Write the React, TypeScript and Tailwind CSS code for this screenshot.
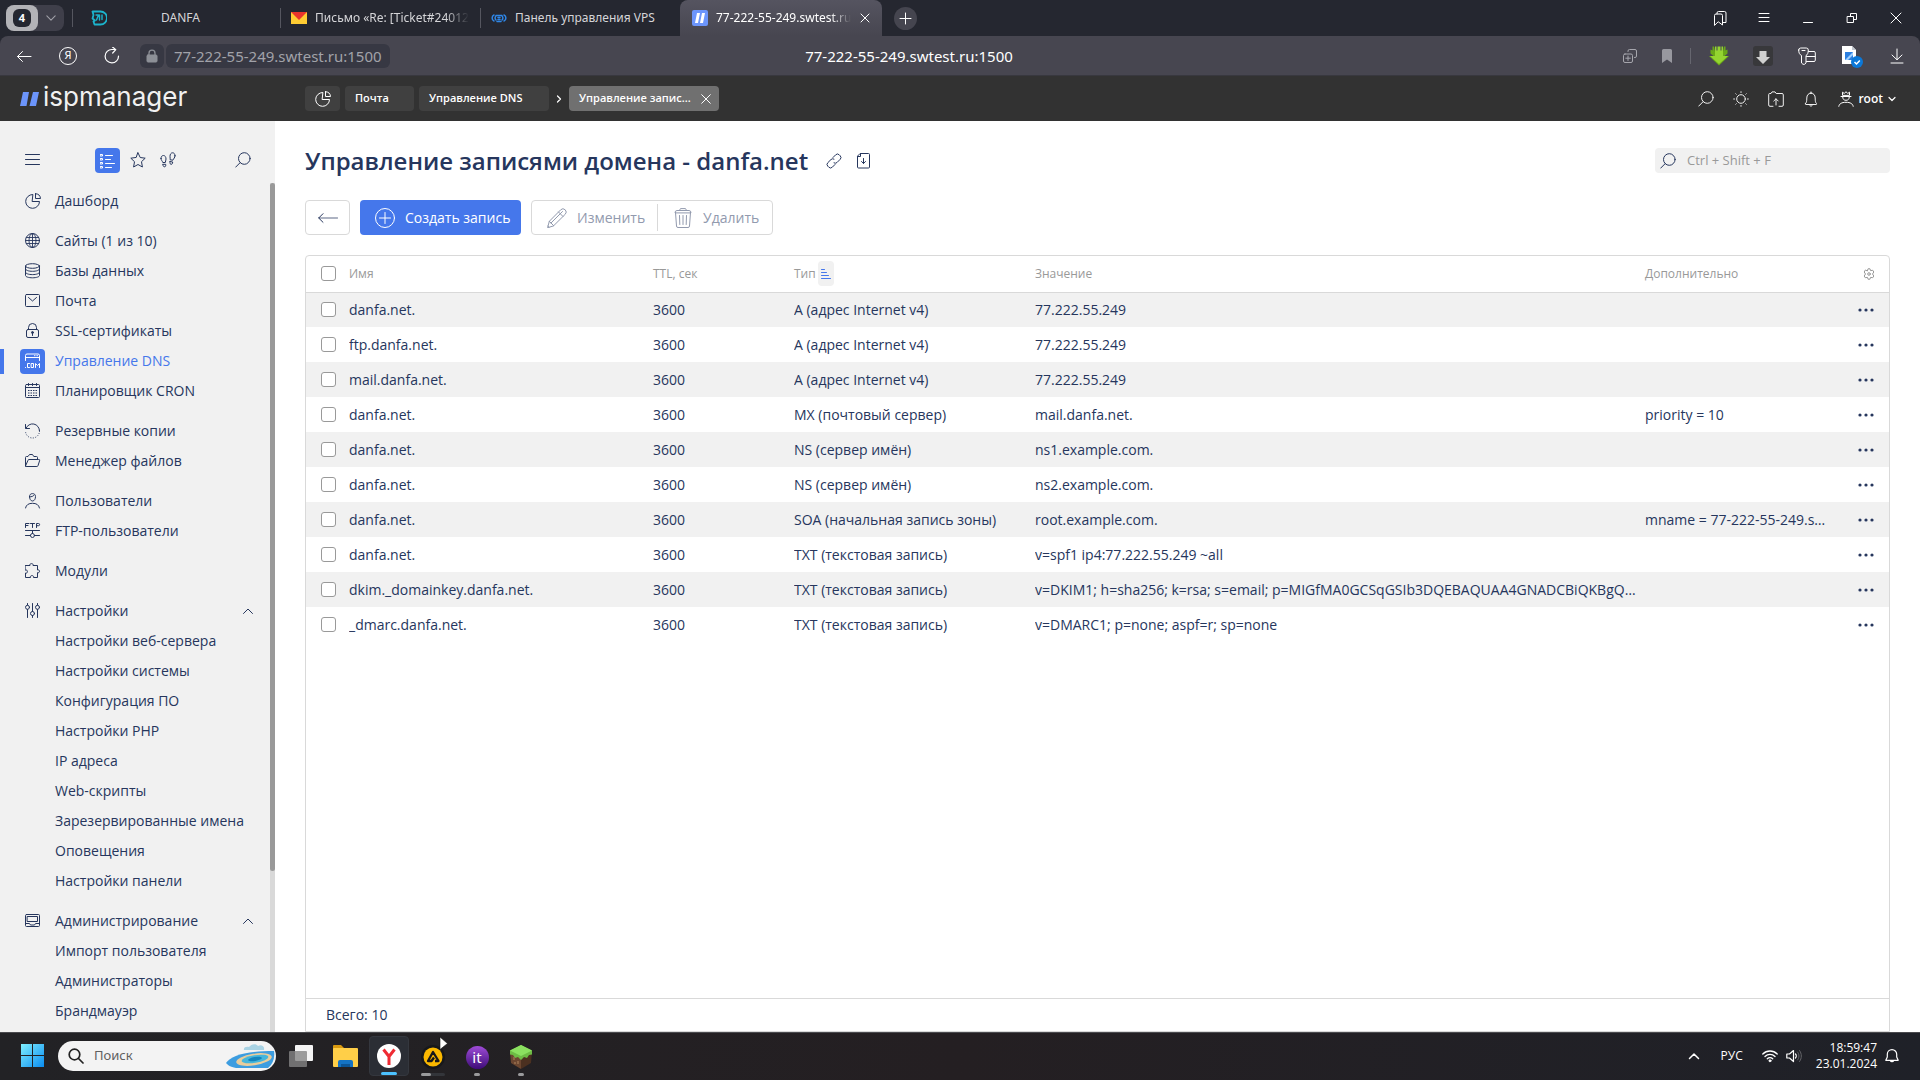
import type { ReactNode } from "react";

type IconProps = { children: ReactNode; className?: string; box?: number };

function Icon({ children, className = "size-4", box = 16 }: IconProps) {
  return (
    <svg
      viewBox={`0 0 ${box} ${box}`}
      className={`shrink-0 ${className}`}
      fill="none"
      stroke="currentColor"
      strokeLinecap="round"
      strokeLinejoin="round"
      aria-hidden="true"
    >
      {children}
    </svg>
  );
}

const PieIcon = () => (
  <Icon>
    <path d="M7.5 1.500A6.900 6.900 0 1 0 14.500 8.500h-7z" />
    <path d="M10.5.7v4.800h5A5.200 5.200 0 0 0 10.5.7z" />
  </Icon>
);
const GlobeIcon = () => (
  <Icon>
    <circle cx="7.5" cy="7.5" r="7" />
    <ellipse cx="7.5" cy="7.5" rx="3.500" ry="7" strokeWidth=".9" />
    <path d="M7.500.5v14M.5 7.500h14M1.500 4.500h12M1.500 10.500h12" strokeWidth=".9" />
  </Icon>
);
const DatabaseIcon = () => (
  <Icon>
    <ellipse cx="7.5" cy="3" rx="7" ry="2.300" />
    <path d="M.5 3v9.500c0 1.300 3.100 2.300 7 2.300s7-1 7-2.300V3M.5 6c0 1.300 3.100 2.300 7 2.300s7-1 7-2.300M.5 9.300c0 1.300 3.100 2.300 7 2.300s7-1 7-2.300" />
  </Icon>
);
const MailIcon = () => (
  <Icon>
    <rect x=".5" y="1.500" width="14" height="12" rx="1" />
    <path d="M3.500 4.500 7.500 8l4-3.500" />
  </Icon>
);
const LockIcon = () => (
  <Icon>
    <rect x="1.500" y="6.500" width="12" height="8" rx="1.500" />
    <path d="M3.500 6.500V4.500a4 4 0 0 1 8 0v2M7.500 10v2.500" />
    <circle cx="7.5" cy="9.500" r="1" fill="currentColor" />
  </Icon>
);
const CalendarIcon = () => (
  <Icon>
    <rect x=".5" y="1.500" width="14" height="13" rx="1" />
    <path d="M.5 4.500h14M3.500.5v2M7.500.5v2M11.500.5v2" />
    <path d="M3 7.500h9M3 10h9M3 12.500h9" strokeDasharray="1.500 1" strokeLinecap="butt" />
  </Icon>
);
const BackupIcon = () => (
  <Icon>
    <path d="M.5 1.500v4h4M1 5.300A7 7 0 0 1 14.500 8" />
    <path d="M14.500 8a7 7 0 0 1-14 0" strokeDasharray=".2 2.300" />
  </Icon>
);
const FolderIcon = () => (
  <Icon>
    <path d="M.5 13V4.500a1 1 0 0 1 1-1H3L4.500 1.500h3l1.300 2h2.700a1 1 0 0 1 1 1v2M.5 13 3 7.300a1 1 0 0 1 1-.8h9.700a.9.900 0 0 1 .9 1.200L13 12.700a1.200 1.200 0 0 1-1.100.8H1.100a.6.600 0 0 1-.6-.5z" />
  </Icon>
);
const UserIcon = () => (
  <Icon>
    <path d="M4.500 3.500C4.500 1.600 5.700.6 7.500.6s3 1 3 2.900c0 2.500-1.200 4.500-3 4.500s-3-2-3-4.500zM4.500 3.800c2 .2 4-.6 4.500-1.500M.5 15c.7-3.300 3.200-4.700 7-4.700s6.300 1.400 7 4.700" />
  </Icon>
);
const FtpIcon = () => (
  <Icon>
    <path d="M.5 4.500v-4h3.500M.5 2.500H3M5.500.5h4M7.500.5v4M11.500 4.500v-4h2a1 1 0 0 1 0 2.200h-2M.5 7.500h14M.5 12.500h5M9.500 12.500h5M7.500 7.500v3" />
    <circle cx="7.5" cy="12.500" r="2" />
  </Icon>
);
const PuzzleIcon = () => (
  <Icon>
    <path d="M.5 2.500H5C4.500 1.200 5.500.6 6.500.6s2 .6 1.500 1.900H12.500V7c1.200-.5 2 .3 2 1.300s-.8 1.800-2 1.300v4.900H8.500c.5-1.300-.5-1.900-1.500-1.900s-2 .6-1.500 1.900H.5v-4.500c1.300.5 1.900-.4 1.900-1.400S1.800 6.500.5 7z" />
  </Icon>
);
const SlidersIcon = () => (
  <Icon>
    <path d="M2.500.5V2M2.500 6.500v8M7.500.5v8M7.500 12.500v2M12.500.5V2M12.500 6.500v8" />
    <circle cx="2.500" cy="4.300" r="2" />
    <circle cx="7.500" cy="10.500" r="2" />
    <circle cx="12.500" cy="4.300" r="2" />
  </Icon>
);
const MonitorIcon = () => (
  <Icon>
    <rect x=".5" y="1.500" width="14" height="12" rx="1" />
    <path d="M2.500 3.500h10v5h-10zM.5 10.500h4l1 1.500h4l1-1.500h4" />
  </Icon>
);
const DnsIcon = () => (
  <Icon>
    <path d="M.5 7.500v-5A1.500 1.500 0 0 1 2 1h11a1.500 1.500 0 0 1 1.500 1.500v5M.5 4.500h14M9.500 2.700h.1M11 2.700h.1M12.500 2.700h.1" />
    <path d="M.5 14.500h.1M4.500 10.500h-2v4h2M6.500 10.500h2v4h-2zM10.500 14.500v-4l2 2 2-2v4" />
  </Icon>
);
const SearchIcon = ({ className }: { className?: string }) => (
  <Icon className={className}>
    <circle cx="9.300" cy="6.500" r="5.800" />
    <path d="M5.200 10.600.7 15.100" />
  </Icon>
);
const ChevronUp = () => (
  <Icon className="size-3" box={12}>
    <path d="M1.500 8.500 6 4l4.500 4.500" />
  </Icon>
);
const BellIcon = () => (
  <Icon>
    <path d="M2.500 12.500c1-1 1.300-2 1.300-5.500C3.800 4 5.500 2.300 8 2.300S12.200 4 12.200 7c0 3.500.3 4.500 1.300 5.500.4.500.2 1-.4 1H2.900c-.6 0-.8-.5-.4-1zM6.500 13.700c.3 2 2.700 2 3 0M7.300 2.200c-.3-2 1.700-2 1.400 0" />
  </Icon>
);

type Item = { label: string; icon?: ReactNode; active?: boolean; open?: boolean };

const menu: Item[][] = [
  [{ label: "Дашборд", icon: <PieIcon /> }],
  [
    { label: "Сайты (1 из 10)", icon: <GlobeIcon /> },
    { label: "Базы данных", icon: <DatabaseIcon /> },
    { label: "Почта", icon: <MailIcon /> },
    { label: "SSL-сертификаты", icon: <LockIcon /> },
    { label: "Управление DNS", icon: <DnsIcon />, active: true },
    { label: "Планировщик CRON", icon: <CalendarIcon /> },
  ],
  [
    { label: "Резервные копии", icon: <BackupIcon /> },
    { label: "Менеджер файлов", icon: <FolderIcon /> },
  ],
  [
    { label: "Пользователи", icon: <UserIcon /> },
    { label: "FTP-пользователи", icon: <FtpIcon /> },
  ],
  [{ label: "Модули", icon: <PuzzleIcon /> }],
  [
    { label: "Настройки", icon: <SlidersIcon />, open: true },
    { label: "Настройки веб-сервера" },
    { label: "Настройки системы" },
    { label: "Конфигурация ПО" },
    { label: "Настройки PHP" },
    { label: "IP адреса" },
    { label: "Web-скрипты" },
    { label: "Зарезервированные имена" },
    { label: "Оповещения" },
    { label: "Настройки панели" },
  ],
  [
    { label: "Администрирование", icon: <MonitorIcon />, open: true },
    { label: "Импорт пользователя" },
    { label: "Администраторы" },
    { label: "Брандмауэр" },
  ],
];

const records = [
  ["danfa.net.", "A (адрес Internet v4)", "77.222.55.249", ""],
  ["ftp.danfa.net.", "A (адрес Internet v4)", "77.222.55.249", ""],
  ["mail.danfa.net.", "A (адрес Internet v4)", "77.222.55.249", ""],
  ["danfa.net.", "MX (почтовый сервер)", "mail.danfa.net.", "priority = 10"],
  ["danfa.net.", "NS (сервер имён)", "ns1.example.com.", ""],
  ["danfa.net.", "NS (сервер имён)", "ns2.example.com.", ""],
  ["danfa.net.", "SOA (начальная запись зоны)", "root.example.com.", "mname = 77-222-55-249.s…"],
  ["danfa.net.", "TXT (текстовая запись)", "v=spf1 ip4:77.222.55.249 ~all", ""],
  [
    "dkim._domainkey.danfa.net.",
    "TXT (текстовая запись)",
    "v=DKIM1; h=sha256; k=rsa; s=email; p=MIGfMA0GCSqGSIb3DQEBAQUAA4GNADCBiQKBgQ…",
    "",
  ],
  ["_dmarc.danfa.net.", "TXT (текстовая запись)", "v=DMARC1; p=none; aspf=r; sp=none", ""],
];

function TabBar() {
  return (
    <div className="flex h-9 shrink-0 items-center bg-[#252730] text-[12px] text-[#d5d5d8]">
      <div className="ml-1.5 flex h-[26px] w-[58px] items-center rounded-lg bg-[#3f3f4a]">
        <button className="flex h-[26px] w-8 items-center justify-center rounded-lg bg-[#b3b3b7]" aria-label="Группа вкладок">
          <span className="flex h-[18px] w-[18px] items-center justify-center rounded-[6px] bg-[#252730] text-[11px] font-bold text-white">
            4
          </span>
        </button>
        <button className="flex flex-1 justify-center text-[#a0a0a8]" aria-label="Список вкладок">
          <Icon className="size-2.5" box={12}>
            <path d="m1 3.500 5 5 5-5" strokeWidth="1.300" />
          </Icon>
        </button>
      </div>
      <div className="ml-2 h-[18px] w-px bg-[#55565f]" />
      <button className="flex h-full w-[207px] items-center pl-[18px]">
        <Icon className="size-4 text-[#1cb4cc]">
          <path d="M1.500 1.500h8a6.500 6.500 0 0 1 0 13H3.500l-1-3 1.500-1-2.500-2 1-3.500z" strokeWidth="1.800" />
          <path d="M5 5h2.500L5.500 10M8.500 5v5M11 5v4.500" strokeWidth="1.400" />
        </Icon>
        <span className="flex-1 pr-7 pl-0.5 text-center">DANFA</span>
      </button>
      <div className="h-5 w-px bg-[#55565f]" />
      <button className="flex h-full w-[199px] items-center gap-2 pr-2 pl-2.5">
        <svg viewBox="0 0 16 12" className="h-3 w-4 shrink-0" aria-hidden="true">
          <path fill="#ffcc33" d="M0 0h16v12H0z" />
          <path fill="#e8352c" d="M0 0h16L8 8z" />
        </svg>
        <span className="whitespace-nowrap [mask-image:linear-gradient(to_right,black_85%,transparent)]">
          Письмо «Re: [Ticket#24012
        </span>
      </button>
      <div className="h-5 w-px bg-[#55565f]" />
      <button className="flex h-full w-[199px] items-center gap-2 pl-2.5 whitespace-nowrap">
        <Icon className="size-4 text-[#2f87e8]">
          <path d="M3 5C.5 6 .5 10 3 11M5 6c-1.200 1-1.200 3 0 4M13 5c2.500 1 2.500 5 0 6M11 6c1.200 1 1.200 3 0 4M7 7.500h2M7 9.500h2M5 5.500h6M6 11.500h4" strokeWidth="1.500" />
        </Icon>
        Панель управления VPS
      </button>
      <button className="flex h-full w-[202px] items-center gap-2 rounded-t-lg bg-linear-to-b from-[#555460] to-[#474650] pr-3 pl-3 text-white">
        <svg viewBox="0 0 16 16" className="size-4 shrink-0" aria-hidden="true">
          <rect width="16" height="16" rx="2" fill="#6c95fb" />
          <path fill="#fff" d="M5 3h3L6 13H3zM10 3h3l-2 10H8z" />
        </svg>
        <span className="whitespace-nowrap [mask-image:linear-gradient(to_right,black_85%,transparent)]">
          77-222-55-249.swtest.ru
        </span>
        <Icon className="ml-auto size-2.5" box={10}>
          <path d="m1 1 8 8M9 1 1 9" />
        </Icon>
      </button>
      <button className="ml-3 flex size-[23px] items-center justify-center rounded-full bg-[#45454f] text-white" aria-label="Новая вкладка">
        <Icon className="size-[13px]" box={13}>
          <path d="M6.500 1v11M1 6.500h11" />
        </Icon>
      </button>
      <div className="ml-auto flex items-center text-white">
        <button className="flex w-11 justify-center" aria-label="Коллекции">
          <Icon>
            <path d="M2.500 15V5.500a1.500 1.500 0 0 1 1.500-1.500h5a1.500 1.500 0 0 1 1.500 1.500V15l-4-3zM5 4V3a1.500 1.500 0 0 1 1.500-1.500h6A1.500 1.500 0 0 1 14 3v9.500h-3" />
          </Icon>
        </button>
        <button className="flex w-11 justify-center" aria-label="Меню">
          <Icon className="size-3.5" box={14}>
            <path d="M2 2.500h10M2 6.500h10M2 10.500h10" />
          </Icon>
        </button>
        <button className="flex w-11 justify-center" aria-label="Свернуть">
          <Icon>
            <path d="M3.500 12.500h9" />
          </Icon>
        </button>
        <button className="flex w-11 justify-center" aria-label="Восстановить">
          <Icon>
            <path d="M3.500 6.500h6v6h-6zM6.500 6.500v-3h6v6h-3" />
          </Icon>
        </button>
        <button className="mr-0.5 flex w-11 justify-center" aria-label="Закрыть">
          <Icon className="size-3" box={12}>
            <path d="m1 1 10 10M11 1 1 11" />
          </Icon>
        </button>
      </div>
    </div>
  );
}

function AddressBar() {
  return (
    <div className="bg-[#252730]">
      <div className="grid h-10 grid-cols-[1fr_auto_1fr] items-center rounded-tr-lg rounded-tl-lg border-b border-[#38383f] bg-[#474650] text-white">
        <div className="flex items-center">
          <button className="ml-4 flex w-4 justify-center" aria-label="Назад">
            <Icon>
              <path d="M15 8.500H1.500M6.500 3.500l-5 5 5 5" />
            </Icon>
          </button>
          <button className="ml-[27px] flex size-[18px] items-center justify-center rounded-full border border-white text-[11px]" aria-label="Яндекс">
            Я
          </button>
          <button className="ml-[26px]" aria-label="Обновить">
            <Icon className="size-[18px]" box={18}>
              <path d="M15.500 9A6.700 6.700 0 1 1 9 2.500h3.500M9.500 0l3.300 2.600L9.700 6" strokeWidth="1.200" />
            </Icon>
          </button>
          <button className="ml-[19px] flex h-6 w-6 items-center justify-center rounded-md bg-[#373843] text-[#8d9097]" aria-label="Защита">
            <Icon className="size-3.5" box={14}>
              <rect x="2" y="6" width="10" height="7" rx="1" fill="currentColor" />
              <path d="M4 6V4.200a3 3 0 0 1 6 0V6" strokeWidth="1.300" />
            </Icon>
          </button>
          <div className="ml-0.5 h-6 rounded-md bg-[#373843] px-2 text-[15px] leading-6 text-[#a1a2a9]">
            77-222-55-249.swtest.ru:1500
          </div>
        </div>
        <div className="-ml-[102px] text-[15px] leading-6">77-222-55-249.swtest.ru:1500</div>
        <div className="flex items-center justify-end">
          <button className="mr-6 text-[#a6a6ad]" aria-label="Добавить">
            <Icon>
              <rect x="1.500" y="6" width="9" height="8.500" rx="1.500" />
              <path d="M6 8v4.500M3.800 10.200h4.500M6 3.500V3a1.500 1.500 0 0 1 1.500-1.500H13A1.500 1.500 0 0 1 14.500 3v5A1.500 1.500 0 0 1 13 9.500h-.5" />
            </Icon>
          </button>
          <button className="mr-[18px] text-[#98989f]" aria-label="Закладка">
            <svg viewBox="0 0 10 14" className="h-3.5 w-2.5" fill="currentColor" aria-hidden="true">
              <path d="M0 1.500A1.500 1.500 0 0 1 1.500 0h7A1.500 1.500 0 0 1 10 1.500V14l-5-3.500L0 14z" />
            </svg>
          </button>
          <div className="mr-1.5 h-4 w-px bg-[#66666f]" />
          <button className="flex w-11 justify-center" aria-label="Загрузка видео">
            <svg viewBox="0 0 20 20" className="size-5" aria-hidden="true">
              <path fill="#6aa818" d="m0 10 10 9.500L20 10h-4.500l3-2.500V3.500l-2 1V.5H15l-1 5H6l-1-5H3.500v4l-2-1v4l3 2.500z" />
              <path fill="#94d430" d="M6 .5h1.500v4h1V.5h3v4h1V.5H14V10h5l-9 8-9-8h5z" />
            </svg>
          </button>
          <button className="flex w-11 justify-center" aria-label="Расширение">
            <svg viewBox="0 0 20 20" className="size-5" aria-hidden="true">
              <rect width="20" height="20" rx="3" fill="#38383b" />
              <path fill="#d0d0d0" d="M6.500 5h7v6H17l-7 7-7-7h3.500z" />
            </svg>
          </button>
          <button className="flex w-11 justify-center" aria-label="Пароли">
            <Icon className="size-[18px]" box={18}>
              <path d="M.7 3a2 2 0 0 1 2-2h5.600a2 2 0 0 1 2 2c0 3-.8 4.800-2.300 5.500V16l-1.500 1.300H5L3.500 16V8.500C1.500 7.500.7 6 .7 3zM4 3.500h3M10.500 4.500H16A1.300 1.300 0 0 1 17.300 5.800v7.400a1.300 1.300 0 0 1-1.300 1.300H8.500M8.500 9.500H17" />
            </Icon>
          </button>
          <button className="flex w-[46px] justify-center" aria-label="Снимок">
            <svg viewBox="0 0 22 24" className="h-6 w-[22px]" aria-hidden="true">
              <path fill="#fff" d="M1 2h10l4 4v14H1z" />
              <path fill="#c3c8cf" d="M11 2v4h4z" />
              <rect x="4" y="8" width="8" height="8" fill="#2c7fe0" />
              <path fill="#9fd0ff" d="m4 16 8-8v3l-5 5z" />
              <circle cx="16" cy="18" r="6" fill="#0b78d8" />
              <path fill="none" stroke="#fff" strokeWidth="1.500" d="m13.500 18 2 2 3.300-3.500" />
            </svg>
          </button>
          <button className="mr-px flex w-11 justify-center" aria-label="Загрузки">
            <Icon>
              <path d="M8 1v10.500M3 7l5 4.800L13 7M2 15h12" />
            </Icon>
          </button>
        </div>
      </div>
    </div>
  );
}

function PanelHeader() {
  return (
    <header className="flex h-[45px] shrink-0 items-center bg-[#323232] font-['Open_Sans','Noto_Sans',sans-serif] text-[#f1f1f1]">
      <a href="#" className="ml-5 flex w-[285px] items-center gap-1">
        <svg viewBox="0 0 19 14" className="h-3.5 w-[19px]" aria-hidden="true">
          <path fill="#6c95fb" d="M3 0h6L6.500 14H0zM13 0h6l-3 14h-6.500z" />
        </svg>
        <span className="-mt-1 font-['Inter','Liberation_Sans',sans-serif] text-[26px] leading-8">ispmanager</span>
      </a>
      <nav className="flex items-center text-[11px] font-semibold text-white" aria-label="Вкладки панели">
        <a href="#" className="flex h-[25px] w-[35px] items-center justify-center rounded bg-[#404040]" aria-label="Дашборд">
          <PieIcon />
        </a>
        <a href="#" className="ml-[5px] flex h-[25px] w-[69px] items-center rounded bg-[#404040] pl-2.5">Почта</a>
        <a href="#" className="ml-[5px] flex h-[25px] w-[130px] items-center rounded bg-[#404040] pl-2.5">Управление DNS</a>
        <span className="flex w-5 justify-center">
          <Icon className="size-2" box={8}>
            <path d="M2.500 1 5.500 4l-3 3" strokeWidth="1.200" />
          </Icon>
        </span>
        <a href="#" className="flex h-[25px] w-[150px] items-center justify-between rounded bg-[#707070] pr-2 pl-2.5">
          Управление запис...
          <Icon className="size-2.5" box={10}>
            <path d="m.7.7 8.600 8.600M9.300.7.7 9.300" />
          </Icon>
        </a>
      </nav>
      <div className="mr-6 ml-auto flex items-center">
        <button className="mr-[19px]" aria-label="Поиск"><SearchIcon /></button>
        <button className="mr-[19px]" aria-label="Тема">
          <Icon>
            <circle cx="8" cy="8" r="4.300" />
            <path d="M8 .7v.8M8 14.500v.8M.7 8h.8M14.500 8h.8M2.800 2.800l.4.400M12.800 12.800l.4.400M2.800 13.200l.4-.4M12.800 3.200l.4-.4" />
          </Icon>
        </button>
        <button className="mr-[19px]" aria-label="Загрузить">
          <Icon>
            <path d="M5 15.300H2a1.300 1.300 0 0 1-1.300-1.300V3.500A1 1 0 0 1 1.700 2.500H3L4 .9h3l1.200 1.600H14a1.300 1.300 0 0 1 1.300 1.300V14a1.300 1.300 0 0 1-1.300 1.300h-3M8 14V7.800M5.800 10 8 7.800l2.200 2.200" />
          </Icon>
        </button>
        <button className="mr-[19px]" aria-label="Уведомления"><BellIcon /></button>
        <button className="flex items-center text-[12px] font-semibold text-white">
          <Icon>
            <path d="M4.500 4V1.200L6.300 2.500 8 .7l1.700 1.800 1.800-1.300V4zM3 5.500h10M4.700 6c0 2.300 1.300 3.300 3.300 3.300s3.300-1 3.300-3.300M.8 15.300c.4-2.500 2.700-4 7.200-4s6.800 1.500 7.200 4" />
          </Icon>
          <span className="mr-[5px] ml-1">root</span>
          <Icon className="size-2" box={8}>
            <path d="m1 2.500 3 3 3-3" strokeWidth="1.200" />
          </Icon>
        </button>
      </div>
    </header>
  );
}

function Sidebar() {
  return (
    <aside className="flex w-[275px] shrink-0 flex-col overflow-hidden bg-[#f1f1f1] text-[#26365d]">
      <div className="flex h-[62px] shrink-0 items-end pb-2.5">
        <button className="mb-[5px] ml-[25px]" aria-label="Свернуть меню">
          <Icon>
            <path d="M.5 2.500h14M.5 7.500h14M.5 12.500h14" />
          </Icon>
        </button>
        <button className="ml-[54px] flex size-[25px] items-center justify-center rounded bg-[#4577eb] text-white" aria-label="Список">
          <Icon>
            <path d="M5.500 2.500h7M5.500 6.500h5M5.500 10.500h9M5.500 14.500h6" />
            <path d="M.5 1.500h2v1.500h-2zM.5 5.500h2V7h-2zM.5 9.500h2V11h-2zM.5 13.500h2V15h-2z" />
          </Icon>
        </button>
        <button className="mb-[5px] ml-2.5" aria-label="Избранное">
          <Icon>
            <path d="m8 .8 2.200 4.700 5 .7-3.700 3.500.9 5.300L8 12.500 3.600 15l.9-5.300L.8 6.200l5-.7z" />
          </Icon>
        </button>
        <button className="mb-[5px] ml-[14px]" aria-label="История">
          <Icon>
            <path d="M1 6.500C1 4.500 2 3.500 3.500 3.500S6 5 6 7c0 1.500-.7 2.500-.7 3.500H2.800C2.500 9 1 8.500 1 6.500zM3 12.300h2.700v1.500a1.300 1.300 0 0 1-2.500.1zM15 3.800C15 1.800 14 .8 12.500.8S10 2.300 10 4.300c0 1.500.3 2.500.2 3.500l2.700.4c.6-1.500 2.100-2.400 2.100-4.400zM10 9.500l2.700.5-.3 1.500a1.300 1.300 0 0 1-2.500-.6z" />
          </Icon>
        </button>
        <button className="mr-6 mb-[5px] ml-auto" aria-label="Поиск по меню"><SearchIcon /></button>
      </div>
      <div className="flex min-h-0 flex-1">
        <nav className="flex flex-1 flex-col gap-2.5 overflow-hidden pt-[3px] text-[14px] leading-5" aria-label="Основное меню">
          {menu.map((group, g) => (
            <ul key={g}>
              {group.map((item) => (
                <li key={item.label}>
                  <a
                    href="#"
                    className={
                      item.active
                        ? "flex h-[30px] items-center text-[#4577eb]"
                        : "flex h-[30px] items-center"
                    }
                  >
                    <span className={item.active ? "mr-4 h-[25px] w-1 bg-[#4577eb]" : "mr-4 w-1"} />
                    <span
                      className={
                        item.active
                          ? "flex size-[25px] items-center justify-center rounded bg-[#4577eb] pl-px text-white"
                          : "flex size-[25px] items-center justify-center pl-px"
                      }
                    >
                      {item.icon}
                    </span>
                    <span className="ml-2.5">{item.label}</span>
                    {item.open && (
                      <span className="mr-4 ml-auto">
                        <ChevronUp />
                      </span>
                    )}
                  </a>
                </li>
              ))}
            </ul>
          ))}
        </nav>
        <div className="w-[5px] bg-[#d9d9d9]">
          <div className="h-[81%] rounded-full bg-[#999]" />
        </div>
      </div>
    </aside>
  );
}

const checkboxClass =
  "block size-[15px] appearance-none rounded-[3px] border border-[#999] bg-white checked:bg-[#4577eb]";

function Records() {
  return (
    <section className="flex min-h-0 flex-1 flex-col rounded-t border border-[#d9d9d9]">
      <table className="w-full table-fixed border-collapse text-left">
        <colgroup>
          <col className="w-[43px]" />
          <col className="w-[304px]" />
          <col className="w-[141px]" />
          <col className="w-[241px]" />
          <col />
          <col className="w-[195px]" />
          <col className="w-[49px]" />
        </colgroup>
        <thead>
          <tr className="h-9 border-b border-[#d9d9d9] text-[12px] text-[#999]">
            <th className="pl-[15px] font-normal">
              <input type="checkbox" aria-label="Выбрать все" className={checkboxClass} />
            </th>
            <th className="font-normal">Имя</th>
            <th className="font-normal">TTL, сек</th>
            <th className="font-normal">
              <span className="flex items-center gap-0.5">
                Тип
                <button className="flex h-[25px] w-4 items-center justify-center rounded bg-[#f1f1f1] text-[#4577eb]" aria-label="Сортировка">
                  <Icon className="size-3" box={12}>
                    <path d="M1.500 1.500h3M1.500 4.500h5M1.500 7.500h7M1.500 10.500h9" />
                  </Icon>
                </button>
              </span>
            </th>
            <th className="font-normal">Значение</th>
            <th className="font-normal">Дополнительно</th>
            <th>
              <button className="ml-[23px] block" aria-label="Настройка столбцов">
                <Icon className="size-3" box={12}>
                  <path d="M4.500 2.600 5 .8h2l.5 1.800 2.300-.3 1 1.700L9.500 6l1.300 2-1 1.700-2.300-.3L7 11.200H5l-.5-1.800-2.300.3-1-1.700L2.500 6 1.200 4l1-1.700z" />
                  <circle cx="6" cy="6" r="1.300" />
                </Icon>
              </button>
            </th>
          </tr>
        </thead>
        <tbody className="text-[14px] text-[#26365d]">
          {records.map(([name, type, value, extra], i) => (
            <tr key={i} className="h-[35px] odd:bg-[#f1f1f1]">
              <td className="pl-[15px]">
                <input type="checkbox" aria-label={`Выбрать ${name}`} className={checkboxClass} />
              </td>
              <td className="truncate pr-2">{name}</td>
              <td>3600</td>
              <td className="truncate pr-2">{type}</td>
              <td className="truncate pr-2">{value}</td>
              <td className="truncate pr-2">{extra}</td>
              <td>
                <button className="ml-[18px] block" aria-label="Действия">
                  <svg viewBox="0 0 16 4" className="h-1 w-4" fill="currentColor" aria-hidden="true">
                    <circle cx="2" cy="2" r="1.600" />
                    <circle cx="8" cy="2" r="1.600" />
                    <circle cx="14" cy="2" r="1.600" />
                  </svg>
                </button>
              </td>
            </tr>
          ))}
        </tbody>
      </table>
      <div className="mt-auto h-[33px] border-t border-[#d9d9d9] pl-5 text-[14px] leading-8 text-[#26365d]">Всего: 10</div>
    </section>
  );
}

function Content() {
  return (
    <main className="flex min-w-0 flex-1 flex-col bg-white px-[30px] text-[#26365d]">
      <div className="flex h-[79px] shrink-0 items-center">
        <h1 className="text-[24px] leading-8 font-semibold">Управление записями домена - danfa.net</h1>
        <button className="ml-[18px]" aria-label="Копировать ссылку">
          <Icon>
            <path d="m7 4.500 2.700-2.700a2.500 2.500 0 0 1 3.500 0l1 1a2.500 2.500 0 0 1 0 3.500L11 9.500a2.500 2.500 0 0 1-3 .4M9 11.500l-2.700 2.700a2.500 2.500 0 0 1-3.500 0l-1-1a2.500 2.500 0 0 1 0-3.500L5 6.500a2.500 2.500 0 0 1 3-.4" />
          </Icon>
        </button>
        <button className="ml-[14px]" aria-label="Экспорт">
          <Icon>
            <path d="M4.500.5h8a1 1 0 0 1 1 1v12.500a1 1 0 0 1-1 1h-10a1 1 0 0 1-1-1V3.500zM4.500 1v2.500H2M7.500 5.500v5M5.500 8.500l2 2 2-2" />
          </Icon>
        </button>
        <label className="ml-auto flex h-[25px] w-[235px] items-center gap-[11px] rounded bg-[#f1f1f1] pl-[5px]">
          <SearchIcon />
          <input
            type="search"
            aria-label="Поиск"
            placeholder="Ctrl + Shift + F"
            className="min-w-0 flex-1 bg-transparent text-[13px] placeholder:text-[#999]"
          />
        </label>
      </div>
      <div className="mb-5 flex h-[35px] shrink-0 gap-2.5 text-[14px]">
        <button className="flex w-[45px] items-center justify-center rounded border border-[#d9d9d9]" aria-label="Назад">
          <Icon className="size-5" box={20}>
            <path d="M19.500 10H.7" strokeWidth="1.500" className="stroke-[#929aae]" />
            <path d="M5 5.700.7 10 5 14.300" />
          </Icon>
        </button>
        <button className="flex w-[161px] items-center rounded bg-[#4577eb] pl-[15px] whitespace-nowrap text-white">
          <Icon className="mr-2.5 size-5" box={20}>
            <circle cx="10" cy="10" r="9.500" />
            <path d="M10 4.500v11M4.500 10h11" />
          </Icon>
          Создать запись
        </button>
        <div className="flex w-[242px] items-center rounded border border-[#d9d9d9] text-[#929aae]">
          <button className="flex w-[125px] items-center pl-[15px]" disabled>
            <Icon className="mr-2.5 size-5" box={20}>
              <path d="m.7 19.300 1.600-6L13.700 1.800a3 3 0 0 1 4.500 4.500L6.700 17.700zM2.300 13.300l4.400 4.400M4 15 15.500 3.500M11.500 4l4.500 4.500M1 18l1 1.300" />
            </Icon>
            Изменить
          </button>
          <div className="h-[27px] w-px bg-[#d9d9d9]" />
          <button className="flex flex-1 items-center pl-[15px]" disabled>
            <Icon className="mr-2.5 size-5" box={20}>
              <path d="M2.500 4.500 3.500 18a1.500 1.500 0 0 0 1.500 1.500h10a1.500 1.500 0 0 0 1.500-1.500l1-13.500M2 4.500A2 2 0 0 1 4 2.500h12a2 2 0 0 1 2 2zM6.500 2.300 7.500.6h5l1 1.700M6.500 7.500l.3 9M10 7.500v9M13.500 7.500l-.3 9" />
            </Icon>
            Удалить
          </button>
        </div>
      </div>
      <Records />
    </main>
  );
}

function Taskbar() {
  return (
    <footer className="flex h-12 shrink-0 items-center border-t border-[#4a4a4e] bg-linear-to-r from-[#222225] via-[#241f22] to-[#1f2128] pb-0.5 text-white">
      <button className="ml-5 flex w-6 justify-center" aria-label="Пуск">
        <svg viewBox="0 0 23 23" className="size-[23px]" aria-hidden="true">
          <defs>
            <linearGradient id="win" x1="0" y1="0" x2="1" y2="1">
              <stop offset="0" stopColor="#7ff0ff" />
              <stop offset="1" stopColor="#0a8cf0" />
            </linearGradient>
          </defs>
          <path fill="url(#win)" d="M0 0h11v11H0zM12 0h11v11H12zM0 12h11v11H0zM12 12h11v11H12z" />
        </svg>
      </button>
      <label className="ml-3.5 flex h-[30px] w-[218px] items-center overflow-hidden rounded-full bg-[#f3f3f3] pl-2.5">
        <Icon className="size-4 text-[#222]">
          <circle cx="6.500" cy="6.500" r="5.300" strokeWidth="1.700" />
          <path d="m10.500 10.500 4.500 4.500" strokeWidth="1.700" />
        </Icon>
        <input
          type="text"
          aria-label="Поиск в Windows"
          placeholder="Поиск"
          className="ml-2.5 w-24 bg-transparent text-[13px] placeholder:text-[#606060]"
        />
        <svg viewBox="0 0 50 26" className="ml-auto h-[26px] w-[50px]" aria-hidden="true">
          <path fill="#a9d3e4" d="M18 7c-1-3 3-4 5-3 2-3 7-4 9-1 3-2 7 0 6 4z" />
          <path fill="#3d9de0" d="M0 20C5 13 18 8 48 8c1 7-1 13-6 17H10c-6-1-8-3-10-5z" />
          <ellipse cx="28" cy="16.500" rx="18" ry="5.800" fill="#e9cd9c" transform="rotate(-9 28 16.500)" />
          <ellipse cx="29" cy="16" rx="13.500" ry="3.800" fill="#45b6dc" transform="rotate(-9 29 16)" />
          <ellipse cx="29" cy="16" rx="7" ry="2" fill="#1585bd" transform="rotate(-9 29 16)" />
        </svg>
      </label>
      <div className="ml-[3px] flex items-center">
        <button className="flex w-11 justify-center" aria-label="Представление задач">
          <svg viewBox="0 0 24 22" className="h-[22px] w-6" aria-hidden="true">
            <rect x="6" width="18" height="16" rx="1" fill="#f4f4f4" />
            <rect y="6" width="18" height="16" rx="1" fill="#858585" fillOpacity=".8" />
          </svg>
        </button>
        <button className="flex w-11 justify-center" aria-label="Проводник">
          <svg viewBox="0 0 25 22" className="h-[22px] w-[25px]" aria-hidden="true">
            <path fill="#d99a10" d="M0 1a1 1 0 0 1 1-1h7l3 3v5H0z" />
            <rect y="3" width="25" height="19" rx="1" fill="#ffcf48" />
            <path fill="#1473c4" d="M5 22v-5a2 2 0 0 1 2-2h11a2 2 0 0 1 2 2v5z" />
            <path fill="#0c5596" d="M8 19h9v3H8z" />
          </svg>
        </button>
        <button className="mx-0.5 flex size-10 flex-col items-center justify-end gap-1 rounded border border-[#34373e] bg-[#2b2e35]" aria-label="Яндекс Браузер">
          <svg viewBox="0 0 24 24" className="size-6" aria-hidden="true">
            <circle cx="12" cy="12" r="12" fill="#fff" />
            <path fill="none" stroke="#ef2b33" strokeWidth="3" d="M6.500 5.500 12 12.500l5.500-7M12 12v9" />
          </svg>
          <span className="h-[3px] w-4 rounded-full bg-[#4cc2ff]" />
        </button>
        <button className="relative flex h-10 w-11 flex-col items-center justify-end gap-1" aria-label="AIMP">
          <svg viewBox="0 0 24 24" className="size-6" aria-hidden="true">
            <circle cx="12" cy="12" r="12" fill="#17181b" />
            <circle cx="12" cy="12" r="9.500" fill="#fbb800" />
            <path fill="none" stroke="#17181b" strokeWidth="2.300" strokeLinejoin="round" d="M14 16h3.500L12 7l-5 9h3.500l2.500-3.500" />
          </svg>
          <span className="flex h-[3px] w-6 rounded-full bg-[#33353a]">
            <span className="w-2.5 rounded-full bg-[#9a9a9c]" />
          </span>
          <svg viewBox="0 0 9 15" className="absolute top-0 right-[7px] h-[15px] w-[9px]" aria-hidden="true">
            <path fill="#fff" stroke="#111" strokeWidth=".6" d="M1 1v12.500L8.500 7.500z" />
          </svg>
        </button>
        <button className="flex h-10 w-11 flex-col items-center justify-end gap-1" aria-label="itch">
          <span className="flex size-[23px] items-center justify-center rounded-full bg-linear-to-b from-[#a04bd8] to-[#3f0a78] text-[15px] leading-5">
            it
          </span>
          <span className="h-[3px] w-1.5 rounded-full bg-[#9a9a9c]" />
        </button>
        <button className="flex h-10 w-11 flex-col items-center justify-end gap-1" aria-label="Minecraft">
          <svg viewBox="0 0 22 24" className="h-6 w-[22px]" aria-hidden="true">
            <path fill="#6b4630" d="m0 6 11 6v12L1 18z" />
            <path fill="#4b3020" d="m22 6-11 6v12l10-6z" />
            <path fill="#6dbb44" d="m11 0 11 5.500v4l-3 .5-2 3-3-1-3 3-3-3-3 1-2-3-3-.5v-4z" />
            <path fill="#8be060" d="m11 0 11 5.500L11 11 0 5.500z" />
            <path fill="#8d6546" d="M3 12h2v3H3zM7 16h2v3H7zM4 17h2v2H4z" />
          </svg>
          <span className="h-[3px] w-1.5 rounded-full bg-[#9a9a9c]" />
        </button>
      </div>
      <div className="mr-5 ml-auto flex items-center font-['Open_Sans','Noto_Sans',sans-serif] text-[12px]">
        <button aria-label="Скрытые значки">
          <Icon className="size-3" box={12}>
            <path d="M1.500 8.500 6 4l4.500 4.500" strokeWidth="1.500" />
          </Icon>
        </button>
        <span className="ml-[21px]">РУС</span>
        <div className="ml-[19px] flex gap-2">
          <Icon>
            <path d="M.8 6c4-4 10.400-4 14.400 0M3 8.500c2.800-2.800 7.200-2.800 10 0M5.300 10.800c1.500-1.500 3.900-1.500 5.400 0" strokeWidth="1.300" />
            <circle cx="8" cy="12.800" r="1" fill="currentColor" />
          </Icon>
          <Icon>
            <path d="M.8 6v4h2.700L7.500 13.500v-11L3.500 6zM9.500 6c1 1 1 3 0 4" strokeWidth="1.200" />
            <path d="M11.500 4c2 2 2 6 0 8M13.500 2.500c2.500 3 2.500 8 0 11" className="stroke-[#66666b]" />
          </Icon>
        </div>
        <div className="ml-3.5 text-right leading-4">
          <div>18:59:47</div>
          <div>23.01.2024</div>
        </div>
        <button className="ml-[7px]" aria-label="Уведомления Windows">
          <Icon>
            <path d="M1.800 12.300 3.300 9V6.300a4.700 4.700 0 0 1 9.400 0V9l1.500 3.300zM6.300 12.500a1.800 1.800 0 0 0 3.400 0" strokeWidth="1.200" />
          </Icon>
        </button>
      </div>
    </footer>
  );
}

export default function App() {
  return (
    <div className="flex h-screen flex-col overflow-hidden font-['Noto_Sans','Open_Sans',sans-serif]">
      <TabBar />
      <AddressBar />
      <PanelHeader />
      <div className="flex min-h-0 flex-1 font-['Open_Sans','Noto_Sans',sans-serif]">
        <Sidebar />
        <Content />
      </div>
      <Taskbar />
    </div>
  );
}
